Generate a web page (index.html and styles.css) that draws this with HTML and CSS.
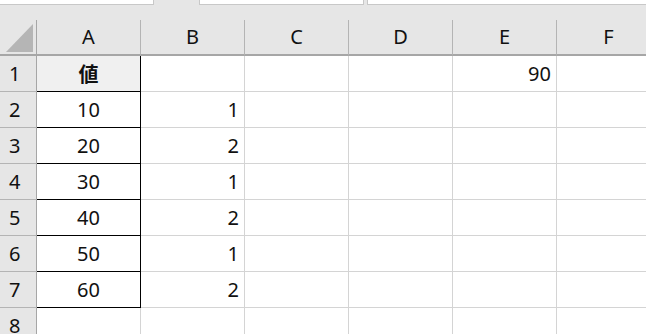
FILE: index.html
```html
<!DOCTYPE html>
<html lang="ja">
<head>
    <meta charset="UTF-8">
    <title>Sheet1</title>
    <link rel="stylesheet" href="styles.css">
</head>
<body>
    <!-- タブ行 -->
    <div class="tabs">
        <div class="tab tab-first"></div>
        <div class="tab tab-second"></div>
        <div class="tab tab-third"></div>
    </div>

    <!-- シート -->
    <div class="sheet">
        <div class="corner">
            <svg width="27" height="28" viewBox="0 0 27 28"><polygon points="27,0 27,28 0,28" fill="#b5b5b5"/></svg>
        </div>
        <div class="col-head">A</div>
        <div class="col-head">B</div>
        <div class="col-head">C</div>
        <div class="col-head">D</div>
        <div class="col-head">E</div>
        <div class="col-head">F</div>

        <div class="row-head">1</div>
        <div class="cell boxed title">値</div>
        <div class="cell"></div>
        <div class="cell"></div>
        <div class="cell"></div>
        <div class="cell num">90</div>
        <div class="cell"></div>

        <div class="row-head">2</div>
        <div class="cell boxed">10</div>
        <div class="cell num">1</div>
        <div class="cell"></div>
        <div class="cell"></div>
        <div class="cell"></div>
        <div class="cell"></div>

        <div class="row-head">3</div>
        <div class="cell boxed">20</div>
        <div class="cell num">2</div>
        <div class="cell"></div>
        <div class="cell"></div>
        <div class="cell"></div>
        <div class="cell"></div>

        <div class="row-head">4</div>
        <div class="cell boxed">30</div>
        <div class="cell num">1</div>
        <div class="cell"></div>
        <div class="cell"></div>
        <div class="cell"></div>
        <div class="cell"></div>

        <div class="row-head">5</div>
        <div class="cell boxed">40</div>
        <div class="cell num">2</div>
        <div class="cell"></div>
        <div class="cell"></div>
        <div class="cell"></div>
        <div class="cell"></div>

        <div class="row-head">6</div>
        <div class="cell boxed">50</div>
        <div class="cell num">1</div>
        <div class="cell"></div>
        <div class="cell"></div>
        <div class="cell"></div>
        <div class="cell"></div>

        <div class="row-head">7</div>
        <div class="cell boxed">60</div>
        <div class="cell num">2</div>
        <div class="cell"></div>
        <div class="cell"></div>
        <div class="cell"></div>
        <div class="cell"></div>

        <div class="row-head">8</div>
        <div class="cell"></div>
        <div class="cell"></div>
        <div class="cell"></div>
        <div class="cell"></div>
        <div class="cell"></div>
        <div class="cell"></div>
    </div>
</body>
</html>
```

FILE: styles.css
```css
* {
    box-sizing: border-box;
}

body {
    margin: 0;
    background-color: #e6e6e6;
    font-family: "Noto Sans", "Noto Sans CJK JP", sans-serif;
    font-size: 20px;
    color: #111;
    overflow: hidden;
    height: 334px;
}

/* 上のタブ */
.tabs {
    display: flex;
    height: 20px;
    align-items: flex-start;
}

.tab {
    height: 5px;
    background-color: #fff;
    border: 1px solid #c8c8c8;
    border-top: none;
}

.tab-first {
    width: 155px;
    margin-left: -1px;
}

.tab-second {
    width: 165px;
    margin-left: 45px;
}

.tab-third {
    flex: 1;
    margin-left: 3px;
    margin-right: -2px;
}

/* シート本体 */
.sheet {
    display: grid;
    grid-template-columns: 37px repeat(6, 104px);
    grid-template-rows: 36px repeat(8, 36px);
    width: 661px;
}

.corner {
    display: flex;
    align-items: flex-end;
    justify-content: flex-end;
    padding: 0 3px 2px 0;
    border-right: 1px solid #a6a6a6;
    border-bottom: 2px solid #a6a6a6;
}

.col-head {
    display: flex;
    align-items: center;
    justify-content: center;
    border-right: 1px solid #b4b4b4;
    border-bottom: 2px solid #a6a6a6;
    padding-bottom: 1px;
}

.row-head {
    display: flex;
    align-items: center;
    padding-left: 9px;
    border-right: 1px solid #a6a6a6;
    border-bottom: 1px solid #b4b4b4;
}

.cell {
    display: flex;
    align-items: center;
    padding: 0 5px;
    background-color: #fff;
    border-right: 1px solid #d4d4d4;
    border-bottom: 1px solid #d4d4d4;
}

.num {
    justify-content: flex-end;
}

.boxed {
    justify-content: center;
    border-right-color: #000;
    border-bottom-color: #000;
}

.title {
    background-color: #f0f0f0;
    font-weight: bold;
}
```
